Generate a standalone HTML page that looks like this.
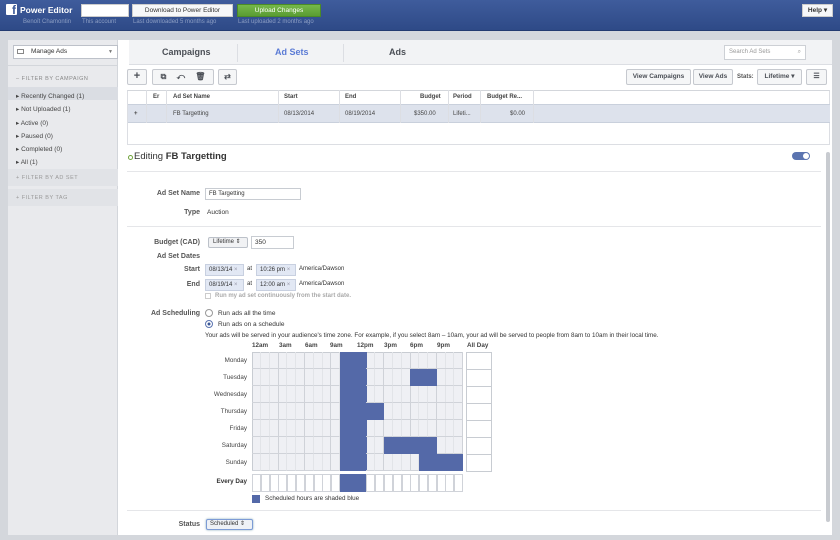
<!DOCTYPE html>
<html><head><meta charset="utf-8"><style>
*{box-sizing:border-box;margin:0;padding:0}
body{width:840px;height:540px;overflow:hidden;background:#d4d7dc;font-family:"Liberation Sans",sans-serif;font-size:7px;color:#333;position:relative}
.a{position:absolute}
.hdr{left:0;top:0;width:840px;height:31px;background:linear-gradient(#3f5c9c,#2e4a87);border-bottom:1px solid #233b70}
.btn{position:absolute;background:#f5f6f7;border:1px solid #c6c9cf;border-radius:2px;color:#4b4f56;font-weight:bold;text-align:center}
.lbl{position:absolute;text-align:right;font-weight:bold;color:#555;width:80px}
.cell{position:absolute;border-right:1px solid #d6d9de;border-bottom:1px solid #d6d9de}
.tag{position:absolute;background:#e2e8f4;border:1px solid #c8d0e0;height:12px;line-height:10px;padding-left:3px;color:#333}
</style></head><body>
<div class="a hdr"></div>
<div class="a" style="left:6px;top:4px;width:11px;height:11px;background:#fff;border-radius:1px;color:#3b5998;font-weight:bold;font-size:12px;line-height:13px;text-align:right;padding-right:1px">f</div>
<div class="a" style="left:20px;top:5px;color:#fff;font-weight:bold;font-size:8.5px">Power Editor</div>
<div class="a" style="left:23px;top:19px;color:#8b9dc3;font-size:6px">Benoît Chamontin</div>
<div class="a" style="left:82px;top:19px;color:#8b9dc3;font-size:6px">This account</div>
<div class="a" style="left:81px;top:4px;width:48px;height:13px;background:#fff;border:1px solid #ccc"></div>
<div class="a" style="left:132px;top:4px;width:101px;height:13px;background:#f6f7f9;border:1px solid #ccc;color:#333;font-size:6.5px;text-align:center;line-height:12px">Download to Power Editor</div>
<div class="a" style="left:133px;top:19px;color:#8b9dc3;font-size:6px">Last downloaded 5 months ago</div>
<div class="a" style="left:237px;top:4px;width:84px;height:13px;background:linear-gradient(#75b84a,#5a9c32);border:1px solid #4b8a27;color:#fff;font-size:6.5px;text-align:center;line-height:12px">Upload Changes</div>
<div class="a" style="left:238px;top:19px;color:#8b9dc3;font-size:6px">Last uploaded 2 months ago</div>
<div class="a" style="left:802px;top:4px;width:31px;height:13px;background:#f6f7f9;border:1px solid #ccc;color:#333;font-size:6.5px;font-weight:bold;text-align:center;line-height:12px">Help ▾</div>

<!-- panel -->
<div class="a" style="left:8px;top:40px;width:824px;height:495px;background:#fff"></div>
<div class="a" style="left:8px;top:40px;width:110px;height:495px;background:#e9eaed;border-right:1px solid #d3d6db"></div>
<div class="a" style="left:13px;top:45px;width:105px;height:14px;background:#fff;border:1px solid #bdc1c9;padding-left:17px;line-height:12px;font-size:6.5px;color:#333">Manage Ads<span style="position:absolute;right:4px;color:#777;font-size:5px">▼</span></div>
<div class="a" style="left:17px;top:49px;width:7px;height:5px;border:1px solid #888"></div>
<div class="a" style="left:8px;top:65px;width:110px;height:1px;background:#d3d6db"></div>
<div class="a" style="left:16px;top:76px;font-size:5.5px;color:#888;letter-spacing:.5px">– FILTER BY CAMPAIGN</div>
<div class="a" style="left:8px;top:87px;width:110px;height:13px;background:#dadde3"></div>
<div class="a" style="left:16px;top:90px;font-size:6.5px;color:#444;line-height:13.3px">▸ Recently Changed (1)<br>▸ Not Uploaded (1)<br>▸ Active (0)<br>▸ Paused (0)<br>▸ Completed (0)<br>▸ All (1)</div>
<div class="a" style="left:8px;top:169px;width:110px;height:17px;background:#e1e3e7"></div>
<div class="a" style="left:16px;top:175px;font-size:5.5px;color:#999;letter-spacing:.5px">+ FILTER BY AD SET</div>
<div class="a" style="left:8px;top:189px;width:110px;height:17px;background:#e1e3e7"></div>
<div class="a" style="left:16px;top:195px;font-size:5.5px;color:#999;letter-spacing:.5px">+ FILTER BY TAG</div>

<!-- tabs -->
<div class="a" style="left:129px;top:40px;width:703px;height:25px;background:#f2f3f5;border-bottom:1px solid #dcdee3"></div>
<div class="a" style="left:162px;top:47px;font-size:9px;font-weight:bold;color:#4b4f56">Campaigns</div>
<div class="a" style="left:237px;top:44px;width:1px;height:18px;background:#dcdee3"></div>
<div class="a" style="left:275px;top:47px;font-size:9px;font-weight:bold;color:#5b7bd5">Ad Sets</div>
<div class="a" style="left:343px;top:44px;width:1px;height:18px;background:#dcdee3"></div>
<div class="a" style="left:389px;top:47px;font-size:9px;font-weight:bold;color:#4b4f56">Ads</div>
<div class="a" style="left:724px;top:45px;width:82px;height:15px;background:#fff;border:1px solid #cdd0d5;padding-left:4px;line-height:13px;font-size:6px;color:#999">Search Ad Sets<span style="position:absolute;right:4px">⌕</span></div>

<!-- toolbar -->
<div class="btn" style="left:127px;top:69px;width:20px;height:16px;font-size:11px;line-height:13px">+</div>
<div class="btn" style="left:152px;top:69px;width:62px;height:16px;font-size:8px;line-height:14px;word-spacing:8px">⧉ ↶ 🗑</div>
<div class="btn" style="left:218px;top:69px;width:19px;height:16px;font-size:8px;line-height:14px">⇄</div>
<div class="btn" style="left:626px;top:69px;width:65px;height:16px;font-size:6.5px;line-height:14px">View Campaigns</div>
<div class="btn" style="left:693px;top:69px;width:40px;height:16px;font-size:6.5px;line-height:14px">View Ads</div>
<div class="a" style="left:737px;top:74px;font-size:6px;font-weight:bold;color:#555">Stats:</div>
<div class="btn" style="left:757px;top:69px;width:45px;height:16px;font-size:6.5px;line-height:14px">Lifetime ▾</div>
<div class="btn" style="left:806px;top:69px;width:21px;height:16px;font-size:7px;line-height:14px">☰</div>

<!-- table -->
<div class="a" style="left:127px;top:90px;width:703px;height:55px;border:1px solid #dcdee3;border-top:1px solid #d3d6db"></div>
<div class="a" style="left:128px;top:104px;width:702px;height:19px;background:#dde2ec;border-top:1px solid #c9d0dc;border-bottom:1px solid #c9d0dc"></div>
<div class="a" style="left:127px;top:90px;width:1px;height:33px"></div>
<div class="a" style="left:146px;top:90px;width:1px;height:33px;background:#dcdee3"></div>
<div class="a" style="left:166px;top:90px;width:1px;height:33px;background:#dcdee3"></div>
<div class="a" style="left:278px;top:90px;width:1px;height:33px;background:#dcdee3"></div>
<div class="a" style="left:339px;top:90px;width:1px;height:33px;background:#dcdee3"></div>
<div class="a" style="left:400px;top:90px;width:1px;height:33px;background:#dcdee3"></div>
<div class="a" style="left:448px;top:90px;width:1px;height:33px;background:#dcdee3"></div>
<div class="a" style="left:480px;top:90px;width:1px;height:33px;background:#dcdee3"></div>
<div class="a" style="left:533px;top:90px;width:1px;height:33px;background:#dcdee3"></div>
<div class="a" style="top:94px;left:0;font-size:6px;font-weight:bold;color:#444;width:840px">
<span class="a" style="left:153px">Er</span><span class="a" style="left:173px">Ad Set Name</span><span class="a" style="left:284px">Start</span><span class="a" style="left:345px">End</span><span class="a" style="left:420px">Budget</span><span class="a" style="left:453px">Period</span><span class="a" style="left:487px">Budget Re...</span></div>
<div class="a" style="top:111px;left:0;font-size:6px;color:#444;width:840px">
<span class="a" style="left:134px;font-weight:bold">+</span><span class="a" style="left:173px">FB Targetting</span><span class="a" style="left:284px">08/13/2014</span><span class="a" style="left:345px">08/19/2014</span><span class="a" style="left:414px">$350.00</span><span class="a" style="left:453px">Lifeti...</span><span class="a" style="left:510px">$0.00</span></div>

<!-- editing -->
<div class="a" style="left:128px;top:155px;width:5px;height:5px;border:1px solid #6fa23a;border-radius:50%"></div>
<div class="a" style="left:134px;top:151px;font-size:9.5px;color:#333">Editing <b>FB Targetting</b></div>
<div class="a" style="left:792px;top:152px;width:18px;height:8px;background:#5b74b0;border-radius:4px"></div>
<div class="a" style="left:803px;top:153px;width:6px;height:6px;background:#fff;border-radius:50%"></div>
<div class="a" style="left:826px;top:152px;width:4px;height:370px;background:#c8cbd0;border-radius:2px"></div>
<div class="a" style="left:127px;top:171px;width:694px;height:1px;background:#e5e6e9"></div>
<div class="a" style="left:127px;top:226px;width:694px;height:1px;background:#e5e6e9"></div>
<div class="a" style="left:127px;top:510px;width:694px;height:1px;background:#e5e6e9"></div>

<div class="lbl" style="left:120px;top:190px">Ad Set Name</div>
<div class="a" style="left:205px;top:188px;width:96px;height:12px;border:1px solid #c8ccd2;padding-left:3px;line-height:10px;font-size:6px">FB Targetting</div>
<div class="lbl" style="left:120px;top:209px">Type</div>
<div class="a" style="left:207px;top:209px;font-size:6.5px">Auction</div>

<div class="lbl" style="left:120px;top:239px">Budget (CAD)</div>
<div class="a" style="left:208px;top:237px;width:40px;height:11px;border:1px solid #bcc1c9;border-radius:2px;background:#f1f2f4;line-height:9px;padding-left:4px;font-size:6px">Lifetime ⇕</div>
<div class="a" style="left:251px;top:236px;width:43px;height:13px;border:1px solid #c8ccd2;line-height:11px;padding-left:3px;font-size:6.5px">350</div>
<div class="lbl" style="left:120px;top:253px">Ad Set Dates</div>
<div class="lbl" style="left:120px;top:266px">Start</div>
<div class="lbl" style="left:120px;top:281px">End</div>
<div class="tag" style="left:205px;top:264px;width:39px;font-size:6px">08/13/14 <span style="color:#99a">×</span></div>
<div class="a" style="left:247px;top:266px;font-size:6px">at</div>
<div class="tag" style="left:256px;top:264px;width:40px;font-size:6px">10:26 pm <span style="color:#99a">×</span></div>
<div class="a" style="left:299px;top:266px;font-size:6px">America/Dawson</div>
<div class="tag" style="left:205px;top:279px;width:39px;font-size:6px">08/19/14 <span style="color:#99a">×</span></div>
<div class="a" style="left:247px;top:281px;font-size:6px">at</div>
<div class="tag" style="left:256px;top:279px;width:40px;font-size:6px">12:00 am <span style="color:#99a">×</span></div>
<div class="a" style="left:299px;top:281px;font-size:6px">America/Dawson</div>
<div class="a" style="left:205px;top:293px;width:6px;height:6px;border:1px solid #ccc"></div>
<div class="a" style="left:215px;top:293px;font-size:6px;color:#aaa;font-weight:bold">Run my ad set continuously from the start date.</div>

<div class="lbl" style="left:120px;top:310px">Ad Scheduling</div>
<div class="a" style="left:205px;top:309px;width:8px;height:8px;border:1px solid #999;border-radius:50%"></div>
<div class="a" style="left:218px;top:310px;font-size:6.5px">Run ads all the time</div>
<div class="a" style="left:205px;top:320px;width:8px;height:8px;border:1px solid #5b74b0;border-radius:50%;background:radial-gradient(#3b5998 30%,#fff 40%)"></div>
<div class="a" style="left:218px;top:321px;font-size:6.5px">Run ads on a schedule</div>
<div class="a" style="left:205px;top:332px;font-size:6.3px;white-space:nowrap">Your ads will be served in your audience's time zone. For example, if you select 8am – 10am, your ad will be served to people from 8am to 10am in their local time.</div>
<div class="a" style="left:0;top:342px;font-size:6.3px;font-weight:bold;color:#444">
<span class="a" style="left:252px">12am</span><span class="a" style="left:279px">3am</span><span class="a" style="left:305px">6am</span><span class="a" style="left:330px">9am</span><span class="a" style="left:357px">12pm</span><span class="a" style="left:384px">3pm</span><span class="a" style="left:410px">6pm</span><span class="a" style="left:437px">9pm</span><span class="a" style="left:467px;white-space:nowrap">All Day</span></div>
<div class="a" style="left:160px;top:352px;width:87px;text-align:right;font-size:6.3px;color:#444;line-height:17px">Monday<br>Tuesday<br>Wednesday<br>Thursday<br>Friday<br>Saturday<br>Sunday</div>
<div class="a" style="left:160px;top:478px;width:87px;text-align:right;font-size:6.3px;font-weight:bold;color:#333">Every Day</div>
<svg class="a" style="left:0;top:0" width="840" height="540">
<g id="g"></g>
</svg>
<div id="grid"></div>
<div class="a" style="left:252px;top:495px;width:8px;height:8px;background:#5469a8"></div>
<div class="a" style="left:265px;top:495px;font-size:6.3px">Scheduled hours are shaded blue</div>

<div class="lbl" style="left:120px;top:521px">Status</div>
<div class="a" style="left:206px;top:519px;width:47px;height:11px;border:1px solid #7d9cd6;border-radius:2px;background:#eef1f6;box-shadow:0 0 2px #8ab;line-height:9px;padding-left:3px;font-size:6px">Scheduled ⇕</div>
<div class="a" style="left:0;top:535px;width:840px;height:5px;background:#d4d7dc"></div>
<script>
var H='',W=211/24,x0=252,y0=352,rh=17;
var sch={0:[10,12],1:[10,12,18,20],2:[10,12],3:[10,14],4:[10,12],5:[10,12,15,20],6:[10,12,19,23]};
function on(r,c){var s=sch[r];for(var i=0;i<s.length;i+=2)if(c>=s[i]&&c<=s[i+1])return 1;return 0}
H+='<div class="a" style="left:252px;top:352px;width:211px;height:119px;border:1px solid #c8ccd2;background:#eff0f4"></div>';
for(var r=0;r<7;r++)for(var c=0;c<24;c++){var x=x0+c*W,y=y0+r*rh;var b=on(r,c);
H+='<div class="a" style="left:'+x.toFixed(1)+'px;top:'+y+'px;width:'+(W+0.2).toFixed(1)+'px;height:'+rh+'px;background:'+(b?'#5469a8':'transparent')+';border-right:1px solid '+(b?'#5469a8':(c%3==2?'#cfd2d8':'#e2e4e8'))+';border-bottom:1px solid '+(b?'#5469a8':'#d0d3d9')+'"></div>';}
for(var r=0;r<7;r++)H+='<div class="a" style="left:466px;top:'+(y0+r*rh)+'px;width:26px;height:'+(rh+1)+'px;border:1px solid #c8ccd2;background:#fff"></div>';
for(var c=0;c<24;c++){var x=x0+c*W,b=(c>=10&&c<=12);H+='<div class="a" style="left:'+x.toFixed(1)+'px;top:474px;width:'+(W+0.2).toFixed(1)+'px;height:18px;background:'+(b?'#5469a8':'#fff')+';border:1px solid '+(b?'#5469a8':'#d0d3d9')+'"></div>';}
document.getElementById('grid').innerHTML=H;
</script>
</body></html>
